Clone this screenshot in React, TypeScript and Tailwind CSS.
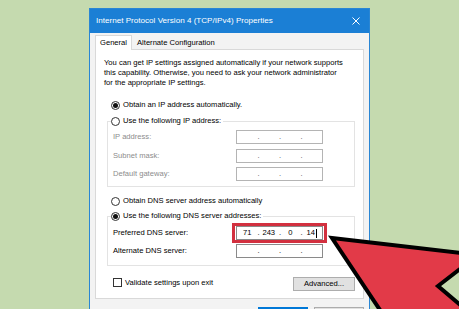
import React from "react";

const font = { fontFamily: '"Liberation Sans", Arial, sans-serif' };

function Radio({ checked, label, className = "" }: { checked?: boolean; label: string; className?: string }) {
    return (
        <div className={`flex h-[12px] items-center gap-[3px] ${className}`}>
            <span className="flex h-[9px] w-[9px] shrink-0 items-center justify-center rounded-full border border-[#333] bg-white">
                {checked ? <span className="h-[5px] w-[5px] rounded-full bg-[#111]" /> : null}
            </span>
            <span className="whitespace-nowrap">{label}</span>
        </div>
    );
}

function IpBox({ parts, disabled, cursor }: { parts?: string[]; disabled?: boolean; cursor?: boolean }) {
    const p = parts ?? ["", "", "", ""];
    return (
        <div
            className={`grid h-[14px] w-[87px] grid-cols-[1fr_1px_1fr_1px_1fr_1px_1fr] items-center border bg-white text-center leading-none ${
                disabled ? "border-[#b4b4b4] text-[#555]" : "border-[#8a8a8a] text-black"
            }`}
        >
            <span>{p[0]}</span>
            <span>.</span>
            <span>{p[1]}</span>
            <span>.</span>
            <span>{p[2]}</span>
            <span>.</span>
            <span className="flex items-center justify-center">
                {p[3]}
                {cursor ? <span className="ml-[1px] h-[9px] w-px bg-black" /> : null}
            </span>
        </div>
    );
}

export default function App() {
    return (
        <div className="relative h-[309px] w-[459px] overflow-hidden bg-[#c5daaf] text-[7.6px] text-black" style={font}>
            <div className="ml-[89px] mt-[8px] w-[281px] border border-[#2a86d4] bg-[#f3f3f3]">
                {/* title bar */}
                <div className="flex h-[24px] items-center justify-between bg-[#1b7fd5] pl-[6px] pr-[8px] text-[8.1px] text-white">
                    <span>Internet Protocol Version 4 (TCP/IPv4) Properties</span>
                    <svg width="8" height="8" viewBox="0 0 8 8" className="mr-[1px]">
                        <path d="M0.5 0.5 L7.5 7.5 M7.5 0.5 L0.5 7.5" stroke="white" strokeWidth="1" />
                    </svg>
                </div>

                <div className="px-[5px]">
                    {/* tabs */}
                    <div className="flex h-[16px] items-end">
                        <div className="relative z-10 -mb-px flex h-[15px] items-center border border-b-0 border-[#d9d9d9] bg-white px-[4px]">
                            General
                        </div>
                        <div className="flex h-[13px] items-center px-[5px]">Alternate Configuration</div>
                    </div>

                    {/* panel */}
                    <div className="h-[250px] border border-[#d9d9d9] bg-white pt-[8px]">
                        <p className="pl-[8px] pr-[4px] leading-[10px]">
                            You can get IP settings assigned automatically if your network supports
                            <br />
                            this capability. Otherwise, you need to ask your network administrator
                            <br />
                            for the appropriate IP settings.
                        </p>

                        <Radio checked label="Obtain an IP address automatically." className="mt-[11px] pl-[15px]" />

                        <fieldset className="ml-[11px] mr-[8px] mt-[4px] border border-[#e3e3e3] pb-[5px]">
                            <legend className="ml-[3px] pr-[2px]">
                                <Radio label="Use the following IP address:" />
                            </legend>
                            <div className="flex flex-col gap-[4.5px] pt-[3px] text-[#8c8c8c]">
                                <div className="flex items-center pl-[5px]">
                                    <span className="w-[123px]">IP address:</span>
                                    <IpBox disabled />
                                </div>
                                <div className="flex items-center pl-[5px]">
                                    <span className="w-[123px]">Subnet mask:</span>
                                    <IpBox disabled />
                                </div>
                                <div className="flex items-center pl-[5px]">
                                    <span className="w-[123px]">Default gateway:</span>
                                    <IpBox disabled />
                                </div>
                            </div>
                        </fieldset>

                        <Radio label="Obtain DNS server address automatically" className="mt-[8px] pl-[15px]" />

                        <fieldset className="ml-[11px] mr-[8px] mt-[3px] border border-[#e3e3e3] pb-[7px]">
                            <legend className="ml-[3px] pr-[2px]">
                                <Radio checked label="Use the following DNS server addresses:" />
                            </legend>
                            <div className="flex flex-col pt-[1px]">
                                <div className="flex items-center pl-[5px]">
                                    <span className="w-[119px]">Preferred DNS server:</span>
                                    <div className="border-[3px] border-[#d2303f] bg-white px-px">
                                        <IpBox parts={["71", "243", "0", "14"]} cursor />
                                    </div>
                                </div>
                                <div className="mt-px flex items-center pl-[5px]">
                                    <span className="w-[123px]">Alternate DNS server:</span>
                                    <IpBox />
                                </div>
                            </div>
                        </fieldset>

                        <div className="mt-[11px] flex items-start justify-between pl-[17px] pr-[8px]">
                            <div className="flex items-center gap-[3px]">
                                <span className="h-[9px] w-[9px] border border-[#333] bg-white" />
                                <span>Validate settings upon exit</span>
                            </div>
                            <div className="flex h-[14px] w-[62px] items-center justify-center border border-[#adadad] bg-[#e1e1e1]">
                                Advanced...
                            </div>
                        </div>
                    </div>

                    {/* bottom buttons */}
                    <div className="flex justify-end gap-[6px] pt-[8px]">
                        <div className="flex h-[16px] w-[50px] items-center justify-center border-2 border-[#0078d7] bg-[#e1e1e1]">
                            OK
                        </div>
                        <div className="flex h-[16px] w-[50px] items-center justify-center border border-[#adadad] bg-[#e1e1e1]">
                            Cancel
                        </div>
                    </div>
                </div>
            </div>

            {/* red arrow overlay */}
            <svg className="pointer-events-none absolute left-0 top-0" width="459" height="309" viewBox="0 0 459 309">
                <polygon
                    points="332,238 478,255 438,286 490,330 490,340 400,340"
                    fill="#e23a48"
                    stroke="#000"
                    strokeWidth="4"
                    strokeLinejoin="miter"
                />
            </svg>
        </div>
    );
}
